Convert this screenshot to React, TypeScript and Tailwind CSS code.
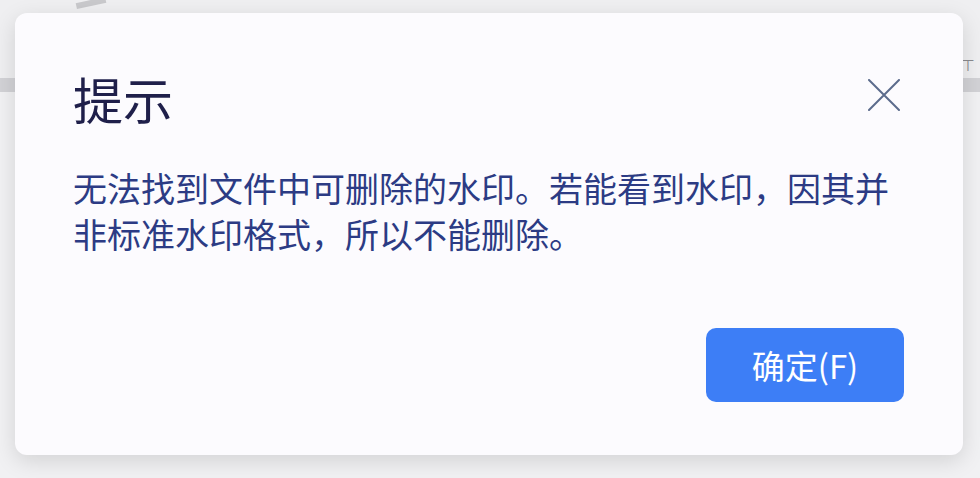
export default function App() {
  return (
    <div
      className="relative w-[980px] h-[478px] overflow-hidden bg-[#ececef]"
      style={{ fontFamily: '"Noto Sans CJK SC", "Noto Sans", sans-serif' }}
    >
      {/* background app behind the dialog */}
      <div className="flex flex-col h-full">
        <div className="h-[78px] bg-[#efeff1] relative">
          <div className="absolute left-[76px] top-0 w-[30px] h-[6px] bg-[#c9c9cc] -rotate-12" />
          <div className="absolute right-[6px] top-[56px] text-[12px] text-[#8a8a8e]">丅</div>
        </div>
        <div className="h-[14px] bg-[#d2d2d6]" />
        <div className="flex-1 bg-[#f1f1f3]" />
      </div>

      {/* dialog */}
      <div className="absolute left-[15px] top-[13px] w-[948px] h-[442px] rounded-[12px] bg-[#fcfbfe] shadow-[0_6px_22px_rgba(0,0,0,0.13)] flex flex-col pl-[58px] pr-[59px]">
        <div className="flex items-center justify-between pt-[58px]">
          <h1 className="text-[50px] leading-[54px] h-[54px] text-[#1f1f4a] font-normal">提示</h1>
          <button className="mr-[4px] -mt-[6px] text-[#5b6b8c]">
            <svg width="32" height="32" viewBox="0 0 32 32" fill="none" stroke="currentColor" strokeWidth="2" strokeLinecap="round">
              <path d="M1 1 L31 31 M31 1 L1 31" />
            </svg>
          </button>
        </div>
        <p className="mt-[40px] text-[34px] leading-[46px] text-[#2c3b84]">
          无法找到文件中可删除的水印。若能看到水印，因其并非标准水印格式，所以不能删除。
        </p>
        <div className="flex justify-end mt-[71px]">
          <button className="w-[198px] h-[74px] rounded-[10px] bg-[#3d7ef6] text-white text-[33px] leading-none">
            确定(F)
          </button>
        </div>
      </div>
    </div>
  );
}
